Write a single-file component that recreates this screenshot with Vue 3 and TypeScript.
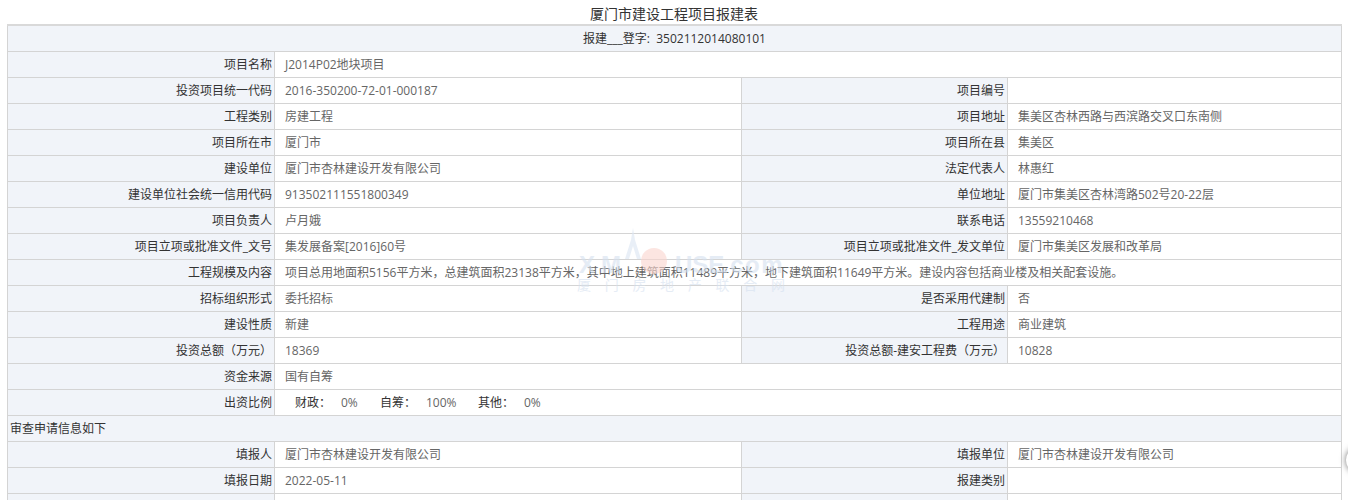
<script setup lang="ts">
interface Row {
  a: string
  b: string
  c?: string
  d?: string
}
const top: Row[] = [
  { a: '项目名称', b: 'J2014P02地块项目' },
  { a: '投资项目统一代码', b: '2016-350200-72-01-000187', c: '项目编号', d: '' },
  { a: '工程类别', b: '房建工程', c: '项目地址', d: '集美区杏林西路与西滨路交叉口东南侧' },
  { a: '项目所在市', b: '厦门市', c: '项目所在县', d: '集美区' },
  { a: '建设单位', b: '厦门市杏林建设开发有限公司', c: '法定代表人', d: '林惠红' },
  { a: '建设单位社会统一信用代码', b: '913502111551800349', c: '单位地址', d: '厦门市集美区杏林湾路502号20-22层' },
  { a: '项目负责人', b: '卢月娥', c: '联系电话', d: '13559210468' },
  { a: '项目立项或批准文件_文号', b: '集发展备案[2016]60号', c: '项目立项或批准文件_发文单位', d: '厦门市集美区发展和改革局' },
  { a: '工程规模及内容', b: '项目总用地面积5156平方米，总建筑面积23138平方米，其中地上建筑面积11489平方米，地下建筑面积11649平方米。建设内容包括商业楼及相关配套设施。' },
  { a: '招标组织形式', b: '委托招标', c: '是否采用代建制', d: '否' },
  { a: '建设性质', b: '新建', c: '工程用途', d: '商业建筑' },
  { a: '投资总额（万元）', b: '18369', c: '投资总额-建安工程费（万元）', d: '10828' },
  { a: '资金来源', b: '国有自筹' },
]
const bottom: Row[] = [
  { a: '填报人', b: '厦门市杏林建设开发有限公司', c: '填报单位', d: '厦门市杏林建设开发有限公司' },
  { a: '填报日期', b: '2022-05-11', c: '报建类别', d: '' },
  { a: '', b: '', c: '', d: '' },
]
const ratios = [
  { k: '财政：', v: '0%' },
  { k: '自筹：', v: '100%' },
  { k: '其他：', v: '0%' },
]
</script>

<template>
  <div class="page">
    <h1 class="title">厦门市建设工程项目报建表</h1>
    <table class="sheet">
      <colgroup>
        <col class="c1" />
        <col class="c2" />
        <col class="c3" />
        <col />
      </colgroup>
      <tbody>
        <tr>
          <td colspan="4" class="band center">报建___登字: &nbsp;3502112014080101</td>
        </tr>
        <tr v-for="r in top" :key="r.a">
          <th>{{ r.a }}</th>
          <td v-if="r.c === undefined" colspan="3">{{ r.b }}</td>
          <template v-else>
            <td>{{ r.b }}</td>
            <th>{{ r.c }}</th>
            <td>{{ r.d }}</td>
          </template>
        </tr>
        <tr>
          <th>出资比例</th>
          <td colspan="3" class="ratios">
            <span v-for="x in ratios" :key="x.k" class="ratio"><b>{{ x.k }}</b><i>{{ x.v }}</i></span>
          </td>
        </tr>
        <tr>
          <td colspan="4" class="band">审查申请信息如下</td>
        </tr>
        <tr v-for="(r, i) in bottom" :key="i">
          <th>{{ r.a }}</th>
          <td>{{ r.b }}</td>
          <th>{{ r.c }}</th>
          <td>{{ r.d }}</td>
        </tr>
      </tbody>
    </table>

    <svg class="mark" width="220" height="72" viewBox="0 0 220 72" aria-hidden="true">
      <path d="M59 2 L61 14 L67 33 L63 33 L59 20 L55 33 L51 33 L57 14 Z" fill="#dbe6f3" />
      <circle cx="80" cy="35" r="13" fill="#fbd5ce" />
      <text x="5" y="47" class="mark-en mark-xm">XM</text>
      <text x="101" y="47" class="mark-en">USE</text>
      <text x="148" y="47" class="mark-en mark-com">.com</text>
      <text x="3" y="64" class="mark-cn">厦门房地产联合网</text>
    </svg>
    <div class="float-btn"></div>
  </div>
</template>

<style scoped>
.page {
  position: relative;
  height: 500px;
  overflow: hidden;
  background: #fff;
  font-family: "Open Sans", "Noto Sans CJK SC", sans-serif;
  font-size: 12px;
  color: #333;
}
.title {
  margin: 0;
  height: 24px;
  line-height: 27px;
  text-align: center;
  font-size: 14px;
  font-weight: 400;
  color: #333;
}
.sheet {
  table-layout: fixed;
  border-collapse: collapse;
  width: 1335px;
  margin-left: 7px;
  border-top: 2px solid #d9d9d9;
}
.c1 { width: 267px; }
.c2 { width: 467px; }
.c3 { width: 266px; }
tr { height: 26px; }
th, td {
  border: 1px solid #d4d4d4;
  padding: 0;
  height: 25px;
  line-height: 25px;
  white-space: nowrap;
  overflow: hidden;
}
th {
  background: #f1f4f9;
  font-weight: 400;
  text-align: right;
  padding-right: 2px;
  color: #333;
}
td {
  padding-left: 10px;
  color: #666;
}
td.band {
  background: #f1f4f9;
  padding-left: 2px;
  color: #333;
}
td.center {
  text-align: center;
  padding-left: 0;
}
.ratios { padding-left: 20px; }
.ratio { display: inline-flex; width: 85px; }
.ratio:nth-child(2) { width: 98px; }
.ratio b { font-weight: 400; color: #333; width: 46px; }
.ratio i { font-style: normal; color: #666; }
.mark {
  position: absolute;
  left: 574px;
  top: 226px;
  pointer-events: none;
  opacity: 0.6;
}
.mark-en {
  font: 700 24px "Liberation Sans", sans-serif;
  fill: #d5e1f0;
}
.mark-xm { letter-spacing: 6px; }
.mark-com { letter-spacing: 1.5px; }
.mark-cn {
  font: 400 14px "Noto Sans CJK SC", sans-serif;
  letter-spacing: 13.7px;
  fill: #d5e1f0;
}
.float-btn {
  position: absolute;
  left: 1346px;
  top: 447px;
  width: 26px;
  height: 26px;
  border-radius: 50%;
  background: #fff;
  box-shadow: 0 0 6px rgba(0, 0, 0, 0.55);
}
</style>

<style>
html, body { overflow: hidden; background: #fff; }
</style>
